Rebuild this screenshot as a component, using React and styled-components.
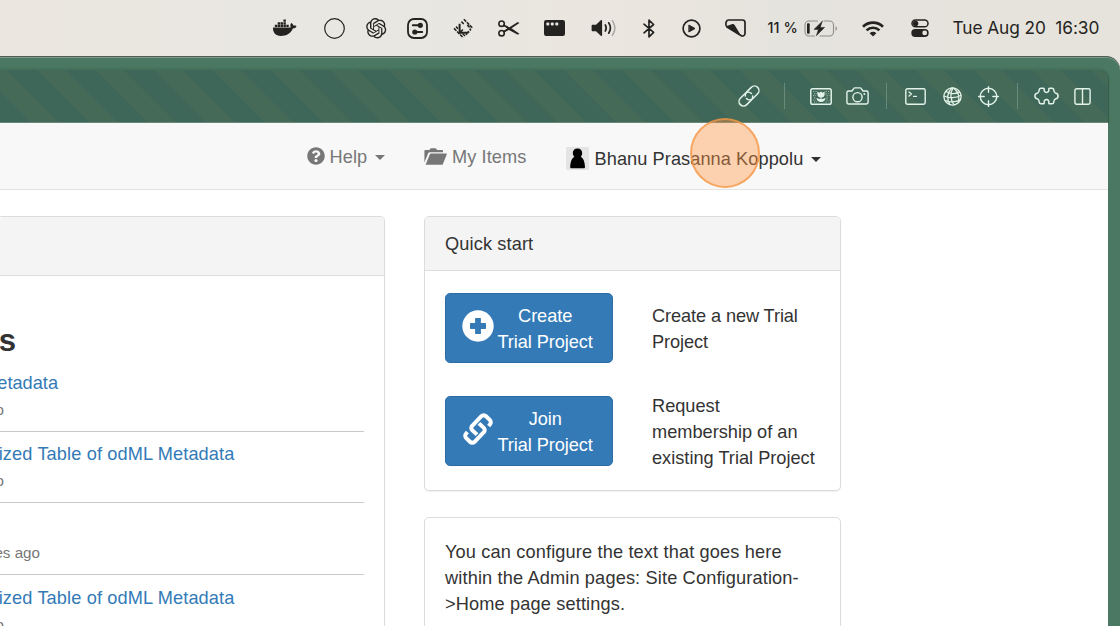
import React from 'react';
import styled, { createGlobalStyle } from 'styled-components';
import { FaDocker, FaQuestionCircle } from 'react-icons/fa';
import { RiOpenaiFill } from 'react-icons/ri';

const GlobalStyle = createGlobalStyle`
  * { box-sizing: border-box; }
  body { margin: 0; overflow: hidden; }
`;

const Screen = styled.div`
  position: relative;
  width: 1120px;
  height: 626px;
  overflow: hidden;
  display: flex;
  flex-direction: column;
  background: #e6e3dc;
  font-family: 'Liberation Sans', Arial, sans-serif;
  font-size: 18.2px;
  line-height: 26px;
  color: #333;
`;

const MenuBar = styled.header`
  height: 56px;
  flex: none;
  display: flex;
  align-items: center;
  padding-left: 272.5px;
  background: linear-gradient(90deg, #ebe7e0 0, #e8e7e2 35%, #ebe6df 55%, #e5e3dd 70%, #e6e3dc 100%);
  color: #242321;
  font-family: Inter, sans-serif;
  white-space: nowrap;
`;

const Slot = styled.span`
  flex: none;
  display: flex;
  align-items: center;
  width: ${(p) => p.$w}px;
  margin-left: ${(p) => p.$gap || 0}px;
  svg { display: block; flex: none; overflow: visible; }
`;

const BatteryLabel = styled.span`
  font-size: 14.4px;
  font-weight: 500;
  letter-spacing: 0.1px;
`;

const Clock = styled.span`
  font-size: 17.3px;
  letter-spacing: -0.08px;
  white-space: pre;
`;

const BrowserWindow = styled.div`
  flex: 1;
  min-height: 0;
  display: flex;
  flex-direction: column;
  padding: 13px 12px 0 0;
  border-top: 1px solid #4f5d55;
  border-top-right-radius: 14px;
  background: #4b7862;
  box-shadow: inset 0 1px 0 #7d9c8b;
`;

const Toolbar = styled.div`
  height: 53px;
  flex: none;
  display: flex;
  align-items: center;
  padding-left: 738.5px;
  border-top-right-radius: 9px;
  border-bottom: 1px solid #66877a;
  color: #e3f3ea;
  background: repeating-linear-gradient(45deg, #3e6759 0, #3e6759 21.2px, #456a58 21.8px, #456a58 41.4px);
  box-shadow: 0 -1px 3px rgba(30, 60, 48, 0.18), 1px 0 1px rgba(30, 60, 48, 0.4);
`;

const Separator = styled.span`
  flex: none;
  width: 1px;
  height: 26px;
  margin-left: ${(p) => p.$gap}px;
  background: #668a7c;
`;

const Page = styled.main`
  flex: 1;
  min-height: 0;
  display: flex;
  flex-direction: column;
  background: #fff;
`;

const NavBar = styled.nav`
  height: 67px;
  flex: none;
  display: flex;
  align-items: center;
  padding-left: 306.5px;
  background: #f8f8f8;
  border-bottom: 1px solid #e4e4e4;
  color: #777;
  white-space: nowrap;
`;

const NavItem = styled.div`
  display: flex;
  align-items: center;
  flex: none;
  width: ${(p) => p.$w}px;
  padding-top: ${(p) => (p.$active ? 5 : 1)}px;
  letter-spacing: 0.07px;
  color: ${(p) => (p.$active ? '#333' : '#777')};
  svg { flex: none; display: block; margin-right: ${(p) => p.$iconGap}px; margin-top: -1px; }
`;

const Caret = styled.i`
  margin-left: 8px;
  margin-top: 1px;
  border: 5px solid transparent;
  border-top-color: currentColor;
  border-bottom-width: 0;
`;

const Columns = styled.div`
  display: flex;
  align-items: flex-start;
  gap: 39px;
  padding-top: 26px;
`;

const SideColumn = styled.div`
  display: flex;
  flex-direction: column;
  gap: 26px;
  width: 417px;
`;

const Panel = styled.section`
  border: 1px solid #dcdcdc;
  border-radius: 5px;
  background: #fff;
  box-shadow: 0 1px 1px rgba(0, 0, 0, 0.06);
`;

const LatestPanel = styled(Panel)`
  width: 385px;
  height: 460px;
  border-left: 0;
  border-top-left-radius: 0;
`;

const PanelHeader = styled.header`
  height: ${(p) => p.$h}px;
  display: flex;
  align-items: center;
  padding-left: 20px;
  border-bottom: 1px solid #dcdcdc;
  border-radius: 4px 4px 0 0;
  background: #f4f4f4;
  letter-spacing: 0.12px;
`;

const EdgeText = styled.div`
  display: flex;
  justify-content: flex-end;
  white-space: nowrap;
  width: ${(p) => p.$w}px;
`;

const Heading = styled(EdgeText)`
  margin-top: 48px;
  height: 36px;
  font-size: 31.2px;
  line-height: 34px;
  font-weight: 700;
`;

const Entry = styled.article`
  width: 364px;
  height: 71.6px;
  padding-top: 9.9px;
  border-bottom: 1px solid #c9c9c9;
`;

const EntryLink = styled(EdgeText)`
  height: 26px;
  letter-spacing: ${(p) => p.$track}px;
  color: #337ab7;
`;

const EntryTime = styled(EdgeText)`
  margin-top: 3px;
  font-size: 15.2px;
  line-height: 21px;
  color: #777;
`;

const QuickRows = styled.div`
  display: flex;
  flex-direction: column;
  gap: 25px;
  padding: 22px 20px 20px;
`;

const QuickRow = styled.div`
  display: flex;
  align-items: center;
  gap: 39px;
  &:first-child { height: 70px; }
  & + & { height: 78px; margin-top: 4px; }
`;

const QuickText = styled.p`
  margin: 0;
  padding-top: 2px;
  width: 172px;
  letter-spacing: ${(p) => p.$track || 0}px;
`;

const ActionButton = styled.button`
  flex: none;
  display: flex;
  align-items: center;
  width: 168px;
  height: 70px;
  padding: 2px 0 0 16px;
  border: 1px solid #2e6da4;
  border-radius: 5px;
  background: #337ab7;
  color: #fff;
  font: inherit;
  letter-spacing: -0.08px;
  text-align: center;
  svg { flex: none; margin: 0 3.5px 6px 0; }
  span { white-space: nowrap; }
`;

const NotePanel = styled(Panel)`
  height: 140px;
  padding: 21px 20px;
  letter-spacing: 0.14px;
  white-space: nowrap;
`;

const ClickMarker = styled.div`
  position: absolute;
  left: 690px;
  top: 118px;
  width: 70px;
  height: 70px;
  border: 2.5px solid rgba(245, 150, 70, 0.75);
  border-radius: 50%;
  background: rgba(255, 150, 68, 0.4);
`;

const Svg = ({ w, h, children, ...rest }) => (
  <svg width={w} height={h} viewBox={`0 0 ${w} ${h}`} fill="none" stroke="currentColor" strokeWidth="1.5" strokeLinecap="round" strokeLinejoin="round" {...rest}>
    {children}
  </svg>
);

const RingIcon = () => <Svg w={21} h={21} strokeWidth="1.2"><circle cx="10.5" cy="10.5" r="9.8" /></Svg>;

const SlidersIcon = () => (
  <Svg w={21} h={21} strokeWidth="1.8">
    <rect x="1" y="1" width="19" height="19" rx="6" />
    <path d="M5.8 7.3H13M8 14h7.2" strokeWidth="2" />
    <circle cx="13.3" cy="7.3" r="2.6" fill="currentColor" stroke="none" />
    <circle cx="7.8" cy="14" r="2.6" fill="currentColor" stroke="none" />
  </Svg>
);

const DiamondIcon = () => (
  <Svg w={21} h={21} strokeLinecap="butt" strokeLinejoin="miter">
    <path d="M5.6 5.8h2v7l1.8-1.700 1 1-1.600 1.600h6.500v2H5.600z" fill="currentColor" stroke="none" />
    <path d="M8.400 3.600l2.400 2.400M10.800 1.200l8.800 8.800M14.200 7l3.400 3.400M1 10.400l9.200 9.200M3 8.600l2 2M12 18l-2.200-2.200M14 16.800l-1.200-1.200M16.200 14.600l-1.400-1.400M18 12.400l-1.400-1.400" strokeWidth="1.500" strokeDasharray="3.400 0.900" />
  </Svg>
);

const ScissorsIcon = () => (
  <Svg w={22} h={17} strokeWidth="1.6">
    <circle cx="3.6" cy="3.7" r="2.7" />
    <circle cx="3.6" cy="13.2" r="2.7" />
    <path d="M5.9 5.3L10 7.8M5.9 11.6L10 9.2" strokeWidth="1.9" />
    <path d="M8.2 9.3L18.9 2.6c.9-.5 2-.3 2.5.5L11.4 9.7 9 10.6zM9 6.3l3.4 1.3 9 6.2c-.5.8-1.6 1-2.5.5L9.3 9z" fill="currentColor" stroke="none" />
  </Svg>
);

const FilmIcon = () => (
  <Svg w={21} h={16} stroke="none">
    <rect x="0" y="0" width="21" height="16" rx="2.2" fill="currentColor" />
    <g fill="#e9e6df">
      <rect x="2.3" y="2.4" width="3" height="3" rx="1" />
      <rect x="6.8" y="2.4" width="3" height="3" rx="1" />
      <rect x="11.3" y="2.4" width="3" height="3" rx="1" />
    </g>
  </Svg>
);

const VolumeIcon = () => (
  <Svg w={26} h={18}>
    <path d="M.6 6.8c0-.7.4-1.1 1-1.1H5L9.8 1.3c.7-.6 1.3-.3 1.3.5v14.4c0 .8-.6 1.1-1.3.5L5 12.3H1.6c-.6 0-1-.4-1-1.1z" fill="currentColor" stroke="none" />
    <path d="M14.3 6q1.8 3 0 6M17.7 3.8q3.4 5.2 0 10.4" strokeWidth="1.7" />
    <path d="M21.4 1.6q5 7.4 0 14.8" stroke="#aaa8a3" strokeWidth="1.5" />
  </Svg>
);

const BluetoothIcon = () => <Svg w={12} h={19} strokeWidth="1.7"><path d="M1 5.2l9.6 8.2L6 17.8V1.2l4.6 4.3L1 13.8" /></Svg>;

const PlayIcon = () => (
  <Svg w={19} h={19} strokeWidth="1.7">
    <circle cx="9.5" cy="9.5" r="8.4" />
    <path d="M7.2 6.2l5.8 3.3-5.8 3.3z" fill="currentColor" strokeWidth="1" />
  </Svg>
);

const KiteIcon = () => (
  <Svg w={21} h={18}>
    <path d="M3.8 1h13.6a2.6 2.6 0 0 1 2.6 2.6v10.8a2.6 2.6 0 0 1-4.1 2.1L2 8C-.2 6 .8 1 3.8 1z" strokeWidth="1.7" />
    <path d="M1.2 7.2l6.2-2.2c1-.3 1.7.1 2.2.9l6.5 10.8z" fill="currentColor" stroke="none" />
  </Svg>
);

const BatteryIcon = () => (
  <Svg w={34} h={17}>
    <path d="M13.5 1H5a4 4 0 0 0-4 4v7a4 4 0 0 0 4 4h5.5M20 1h5.5a4 4 0 0 1 4 4v7a4 4 0 0 1-4 4H16" stroke="#8f8d88" strokeWidth="1.1" />
    <rect x="3" y="3.3" width="2.7" height="10.4" rx="1" fill="currentColor" stroke="none" />
    <path d="M31.5 6q3 2.5 0 5z" fill="#8f8d88" stroke="none" />
    <path d="M18.3 1.2L10 9.4h4.4l-2.1 6.4 8.3-8.4h-4.3z" fill="currentColor" strokeWidth=".5" />
  </Svg>
);

const WifiIcon = () => (
  <Svg w={22} h={17} strokeLinecap="butt" strokeWidth="2.7">
    <path d="M1 6.7a14.3 14.3 0 0 1 20 0M4.6 10.4a9 9 0 0 1 12.8 0" />
    <path d="M11 16.6l-3.3-3.4a4.7 4.7 0 0 1 6.6 0z" fill="currentColor" stroke="none" />
  </Svg>
);

const ControlsIcon = () => (
  <Svg w={18} h={18}>
    <rect x="1" y="1" width="16" height="6.8" rx="3.4" strokeWidth="1.5" />
    <circle cx="4.6" cy="4.4" r="2.7" fill="currentColor" stroke="none" />
    <rect x=".3" y="9.9" width="17.4" height="8" rx="4" fill="currentColor" stroke="none" />
    <circle cx="13.7" cy="13.9" r="2.4" fill="#e6e3dc" stroke="none" />
  </Svg>
);

const ChainIcon = () => (
  <Svg w={20} h={20} strokeWidth="1.5">
    <g transform="rotate(-45 10 10)">
      <path d="M12.6 12.6A4.500 4.500 0 0 1 9 14.500H2.300a4.500 4.500 0 0 1 0-9H9a4.500 4.500 0 0 1 4.500 4.500" />
      <path d="M7.400 7.400A4.500 4.500 0 0 1 11 5.500h6.700a4.500 4.500 0 0 1 0 9H11a4.500 4.500 0 0 1-4.500-4.500" />
    </g>
  </Svg>
);

const PictureIcon = () => (
  <Svg w={22} h={17}>
    <rect x=".8" y=".8" width="20.4" height="15.4" rx="1.8" />
    <path d="M3 3.5h4M4 5.6h3M3 7.7h3M4 9.8h2M3 12h3M4 14h3M15.5 3.5h4M15.500 5.6h3M16.5 7.7h3M16.5 9.8h2M16.5 12h3M15.5 14h3" strokeLinecap="butt" strokeDasharray="1.2 1.2" strokeWidth="1.2" opacity=".6" />
    <path d="M7.4 3.4l2.1 1.4L11 3.4l1.5 1.4 2.1-1.4v3a3.600 3 0 0 1-7.2 0zM10.4 9h1.2v2.3l4-1.3c-.3 2.7-2.2 3.9-4.6 3.9S6.700 12.700 6.400 10l4 1.300z" fill="currentColor" stroke="none" />
  </Svg>
);

const CameraIcon = () => (
  <Svg w={23} h={18} strokeWidth="1.4">
    <path d="M2.600 4H6l1.900-2.700c.2-.3.500-.4.900-.4h5.400c.4 0 .7.100.9.400L17 4h3.400c1 0 1.700.7 1.700 1.700v9.600c0 1-.7 1.700-1.700 1.700H2.600c-1 0-1.700-.7-1.700-1.700V5.700C.9 4.700 1.600 4 2.600 4z" />
    <circle cx="11.5" cy="10.2" r="4.6" />
    <circle cx="18.3" cy="6.9" r="1" fill="currentColor" stroke="none" />
  </Svg>
);

const TerminalIcon = () => (
  <Svg w={21} h={17} strokeWidth="1.4">
    <rect x=".8" y=".8" width="19.4" height="15.4" rx="1.6" />
    <path d="M4 4l2.5 2L4 8M8.5 8.3h3" strokeWidth="1.3" />
  </Svg>
);

const GlobeIcon = () => (
  <Svg w={19} h={19} strokeWidth="1.3">
    <circle cx="9.5" cy="9.5" r="8.6" />
    <path d="M8.7 1C4 6 3.8 12 6.8 17.5M10 1c-3 5-2.5 11.5 1 17M10.5 1c4.5 3.5 6.4 8.5 4.8 14.5M3 4.5c4 2.5 9 2.6 13.5.6M1 9c5 2.5 12 2.3 17-.7M2.2 13.7c4.8 1.8 10.3 1.5 15.2-.8" />
  </Svg>
);

const TargetIcon = () => (
  <Svg w={21} h={21} strokeWidth="1.4">
    <circle cx="10.5" cy="10.5" r="8.3" />
    <path d="M10.5.6v5.6M10.5 14.8v5.6M.6 10.5h5.6M14.8 10.5h5.6" />
  </Svg>
);

const PuzzleIcon = () => (
  <Svg w={25} h={18} strokeWidth="1.5">
    <path d="M7 1.2h2.3c.7 0 1 .5.9 1.2-.3 1.8.6 3 2.3 3s2.600-1.200 2.300-3c-.1-.7.2-1.200.9-1.200H18c1 0 1.600.6 1.700 1.500.2 1.700.6 3 1.700 3.300 1.600.3 2.700 1.500 2.700 3s-1.100 2.700-2.700 3c-1.100.3-1.500 1.600-1.700 3.300-.1.900-.7 1.500-1.700 1.500h-2.300c-.7 0-1-.5-.9-1.200.3-1.800-.6-3-2.300-3s-2.600 1.200-2.300 3c.1.700-.2 1.200-.9 1.200H7c-1 0-1.600-.6-1.700-1.500-.2-1.700-.6-3-1.700-3.300C2 11.700.9 10.500.9 9S2 6.300 3.600 6c1.100-.3 1.500-1.600 1.700-3.300.1-.9.700-1.500 1.700-1.500z" />
  </Svg>
);

const SplitIcon = () => (
  <Svg w={17} h={17} strokeWidth="1.4">
    <rect x=".9" y=".8" width="15.2" height="15.4" rx="1.7" />
    <path d="M8.5 1v15" />
  </Svg>
);

const FolderIcon = () => (
  <Svg w={23} h={17} stroke="none">
    <path d="M.4 14.5V3c0-.6.4-1 1-1h4l.8-1.2c.2-.3.5-.5.9-.5h4.3c.4 0 .7.2.9.5L13 2h5c.6 0 1 .4 1 1v1.2H5.600c-.6 0-1 .3-1.300.8zM7 5.500h15.400c.4 0 .6.300.4.700l-4 10c-.2.400-.5.600-.9.600H1.600l4.300-10.600c.2-.4.600-.7 1.100-.7z" fill="currentColor" />
  </Svg>
);

const AvatarIcon = () => (
  <Svg w={23} h={23} stroke="none">
    <rect width="23" height="23" rx="1" fill="#e4e4e4" />
    <path d="M11.5 1.4c2.8 0 4.7 2 4.700 4.600 0 1.600-.6 2.800-1.400 3.700 2.700 1.400 4 5.300 4.200 10.300 0 1-.5 1.300-1.300 1.300H5.500c-.8 0-1.300-.3-1.300-1.300.2-5 1.500-8.900 4.200-10.300C7.500 8.800 6.800 7.600 6.800 6c0-2.600 1.900-4.600 4.700-4.600z" fill="#000" />
  </Svg>
);

const PlusIcon = () => (
  <Svg w={32} h={32} stroke="none">
    <circle cx="16" cy="16" r="15.7" fill="#fff" />
    <path d="M13.7 8h4.6c.4 0 .6.2.6.6v4.500h4.500c.4 0 .6.200.6.600v4.600c0 .4-.2.600-.6.600h-4.500v4.500c0 .4-.2.600-.6.600h-4.600c-.4 0-.6-.2-.6-.6v-4.500H8.600c-.4 0-.6-.2-.6-.6v-4.600c0-.4.200-.6.600-.6h4.500V8.600c0-.4.200-.6.600-.6z" fill="#337ab7" />
  </Svg>
);

const joinLoop = 'M26.6 14l1.3-1.5a3.3 3.3 0 0 0-.1-4.6L24 4.2a3.3 3.3 0 0 0-4.6 0l-9.2 9.6a3 3 0 0 0 0 4.3l4.8 4.5';

const JoinIcon = () => (
  <Svg w={32} h={34} strokeLinecap="butt" strokeWidth="4">
    <path d={joinLoop} />
    <path d={joinLoop} transform="rotate(180 16 17)" />
  </Svg>
);

const entries = [
  { title: 'etadata', titleWidth: 58, track: 0, time: 'o', timeWidth: 4 },
  { title: 'ized Table of odML Metadata', titleWidth: 234.5, track: 0.12, time: 'o', timeWidth: 4 },
  { title: '', titleWidth: 0, track: 0, time: 'es ago', timeWidth: 40 },
  { title: 'ized Table of odML Metadata', titleWidth: 234.5, track: 0.12, time: 'o', timeWidth: 4 },
];

export default function App() {
  return (
    <Screen>
      <GlobalStyle />
      <MenuBar>
        <Slot $w={23.5}><FaDocker size={23.5} /></Slot>
        <Slot $w={21} $gap={27.5}><RingIcon /></Slot>
        <Slot $w={21} $gap={19}><RiOpenaiFill size={24.5} /></Slot>
        <Slot $w={21} $gap={22}><SlidersIcon /></Slot>
        <Slot $w={21} $gap={25}><DiamondIcon /></Slot>
        <Slot $w={22} $gap={24.5}><ScissorsIcon /></Slot>
        <Slot $w={21} $gap={24}><FilmIcon /></Slot>
        <Slot $w={26} $gap={25.5}><VolumeIcon /></Slot>
        <Slot $w={12} $gap={26.5}><BluetoothIcon /></Slot>
        <Slot $w={19} $gap={26.5}><PlayIcon /></Slot>
        <Slot $w={21} $gap={24}><KiteIcon /></Slot>
        <Slot $w={30} $gap={22}><BatteryLabel>11 %</BatteryLabel></Slot>
        <Slot $w={34} $gap={6}><BatteryIcon /></Slot>
        <Slot $w={22} $gap={24.5}><WifiIcon /></Slot>
        <Slot $w={18} $gap={27}><ControlsIcon /></Slot>
        <Slot $w={150} $gap={23.5}><Clock>{'Tue Aug 20  16:30'}</Clock></Slot>
      </MenuBar>
      <BrowserWindow>
        <Toolbar>
          <Slot $w={20}><ChainIcon /></Slot>
          <Separator $gap={25.5} />
          <Slot $w={22} $gap={25}><PictureIcon /></Slot>
          <Slot $w={23} $gap={14}><CameraIcon /></Slot>
          <Separator $gap={17} />
          <Slot $w={21} $gap={18}><TerminalIcon /></Slot>
          <Slot $w={19} $gap={16.5}><GlobeIcon /></Slot>
          <Slot $w={21} $gap={16}><TargetIcon /></Slot>
          <Separator $gap={18.5} />
          <Slot $w={25} $gap={16}><PuzzleIcon /></Slot>
          <Slot $w={17} $gap={15}><SplitIcon /></Slot>
        </Toolbar>
        <Page>
          <NavBar>
            <NavItem $w={117.5} $iconGap={5}><FaQuestionCircle size={18} />Help<Caret /></NavItem>
            <NavItem $w={142} $iconGap={5}><FolderIcon />My Items</NavItem>
            <NavItem $w={260} $iconGap={5.5} $active><AvatarIcon />Bhanu Prasanna Koppolu<Caret /></NavItem>
          </NavBar>
          <Columns>
            <LatestPanel>
              <PanelHeader $h={59} />
              <Heading $w={16}>s</Heading>
              {entries.map((e, i) => (
                <Entry key={i}>
                  <EntryLink $w={e.titleWidth} $track={e.track}>{e.title}</EntryLink>
                  <EntryTime $w={e.timeWidth}>{e.time}</EntryTime>
                </Entry>
              ))}
            </LatestPanel>
            <SideColumn>
              <Panel>
                <PanelHeader $h={54}>Quick start</PanelHeader>
                <QuickRows>
                  <QuickRow>
                    <ActionButton><PlusIcon /><span>Create<br />Trial Project</span></ActionButton>
                    <QuickText $track={-0.1}>Create a new Trial Project</QuickText>
                  </QuickRow>
                  <QuickRow>
                    <ActionButton><JoinIcon /><span>Join<br />Trial Project</span></ActionButton>
                    <QuickText>Request membership of an existing Trial Project</QuickText>
                  </QuickRow>
                </QuickRows>
              </Panel>
              <NotePanel>
                You can configure the text that goes here<br />within the Admin pages: Site Configuration-<br />&gt;Home page settings.
              </NotePanel>
            </SideColumn>
          </Columns>
        </Page>
      </BrowserWindow>
      <ClickMarker />
    </Screen>
  );
}
